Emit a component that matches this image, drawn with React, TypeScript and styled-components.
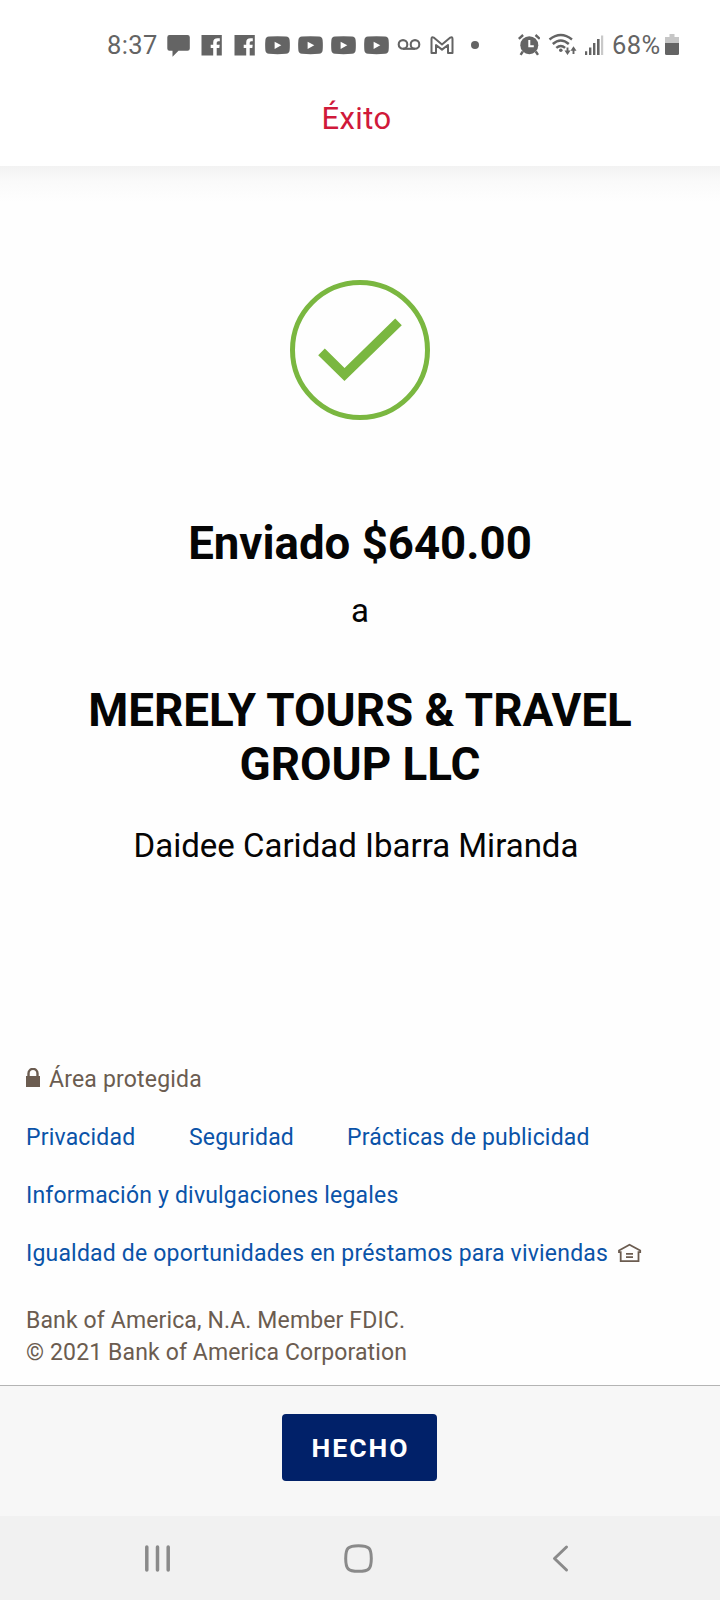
import React from "react";
import styled, { createGlobalStyle } from "styled-components";

const GlobalStyle = createGlobalStyle`
  * { box-sizing: border-box; }
  body { margin: 0; background: #fefefe; font-family: Roboto, "Liberation Sans", sans-serif; }
  h1, h2, p { margin: 0; }
`;

const Screen = styled.div`
  width: 720px;
  height: 1600px;
  display: flex;
  flex-direction: column;
  background: #fefefe;
  overflow: hidden;
`;

const Header = styled.header`
  height: 166px;
  background: #fff;
  flex: none;
`;

const StatusBar = styled.div`
  height: 90px;
  padding: 33px 41px 0 107px;
  display: flex;
  justify-content: space-between;
  color: #646464;
`;

const StatusGroup = styled.div<{ $gap: number; $indent?: number }>`
  display: flex;
  height: 24px;
  gap: ${(p) => p.$gap}px;
  padding-left: ${(p) => p.$indent ?? 0}px;
`;

const StatusText = styled.span<{ $width: number }>`
  width: ${(p) => p.$width}px;
  font-size: 25.5px;
  line-height: 25px;
  letter-spacing: 0.4px;
  white-space: nowrap;
`;

const Glyph = styled.svg`
  display: block;
  flex: none;
`;

const Title = styled.h1`
  text-align: center;
  color: #d0193a;
  font-size: 31px;
  font-weight: 400;
  line-height: 57px;
  letter-spacing: 0.4px;
  padding-right: 7px;
`;

const Main = styled.main`
  flex: 1;
  display: flex;
  flex-direction: column;
  align-items: center;
  text-align: center;
  color: #050505;
  padding-top: 90px;
  background: linear-gradient(#f2f2f2, #fafafa 16px, #fefefe 36px);
`;

const Amount = styled.h2`
  margin-top: 81px;
  font-size: 45.6px;
  line-height: 54px;
  font-weight: 700;
`;

const Preposition = styled.p`
  margin-top: 16px;
  font-size: 33px;
  line-height: 48px;
`;

const Recipient = styled.h2`
  width: 600px;
  margin-top: 49px;
  font-size: 45.75px;
  line-height: 54px;
  font-weight: 700;
`;

const Person = styled.p`
  margin-top: 30px;
  font-size: 33px;
  line-height: 48px;
  padding-right: 8px;
`;

const Legal = styled.section`
  flex: none;
  padding: 1px 26px 0;
  height: 336px;
  color: #6b5c50;
  font-size: 23px;
  letter-spacing: 0.19px;
`;

const LegalRow = styled.div`
  display: flex;
  align-items: center;
  height: 58px;
  padding-top: 1px;
  white-space: nowrap;
`;

const Link = styled.a<{ $width?: number }>`
  color: #0a53a8;
  ${(p) => (p.$width ? `width: ${p.$width}px;` : "")}
`;

const Copyright = styled.p`
  margin-top: 23px;
  line-height: 32px;
  letter-spacing: 0.13px;
`;

const ActionBar = styled.footer`
  flex: none;
  height: 131px;
  border-top: 1px solid #b4b4b4;
  background: #f7f7f7;
  padding: 28px 0 0 282px;
`;

const DoneButton = styled.button`
  display: block;
  width: 155px;
  height: 67px;
  border: 0;
  border-radius: 4px;
  background: #012169;
  color: #fff;
  font: 700 26.5px/67px Roboto, sans-serif;
  letter-spacing: 2px;
  padding: 0 0 0 2px;
`;

const SystemNav = styled.nav`
  flex: none;
  height: 84px;
  background: #f1f1f1;
  display: flex;
  justify-content: space-between;
  padding: 27px 150px 0 143px;
`;

const Facebook = () => (
  <Glyph width="21" height="24" fill="currentColor">
    <path d="M0.5 2H20.8V22.5H15.7V15H18.3L18.7 11.8H15.7V9.8Q15.7 8.3 17.2 8.3H18.8V5.2H16.6Q12.2 5.2 12.2 9.4V11.8H9.7V15H12.2V22.5H0.5Z" />
  </Glyph>
);

const YouTube = () => (
  <Glyph width="25" height="24">
    <path d="M4 3.6Q12.5 2.8 21 3.6Q24.3 3.9 24.6 7Q25.1 12.3 24.6 17.5Q24.3 20.5 21 20.8Q12.5 21.6 4 20.8Q0.7 20.5 0.4 17.5Q-0.1 12.3 0.4 7Q0.7 3.9 4 3.6Z" fill="currentColor" />
    <path d="M9.6 8.7L16.3 12.3L9.6 15.9Z" fill="#fff" />
  </Glyph>
);

export default function App() {
  return (
    <>
      <GlobalStyle />
      <Screen>
        <Header>
          <StatusBar>
            <StatusGroup $gap={8}>
              <StatusText $width={52}>8:37</StatusText>
              <Glyph width="24" height="24" fill="currentColor">
                <path d="M2.5 2H20.5Q22.8 2 22.8 4.3V15.5Q22.8 17.8 20.5 17.8H11.5L5.5 23.8V17.8H2.5Q0.3 17.8 0.3 15.5V4.3Q0.3 2 2.5 2Z" />
              </Glyph>
              <StatusGroup $gap={12} $indent={2}>
                <Facebook />
                <Facebook />
              </StatusGroup>
              <StatusGroup $gap={8} $indent={2}>
                <YouTube />
                <YouTube />
                <YouTube />
                <YouTube />
                <Glyph width="24" height="24" fill="none" stroke="currentColor" strokeWidth="2.1">
                  <circle cx="6" cy="11.4" r="4.3" />
                  <circle cx="18" cy="11.4" r="4.3" />
                  <path d="M6 15.8H18" />
                </Glyph>
                <Glyph width="26" height="24" fill="none" stroke="currentColor" strokeWidth="2" strokeLinejoin="round">
                  <path d="M2.5 20V6Q2.5 3.4 4.7 4.6L13 11.4L21.3 4.6Q23.5 3.4 23.5 6V20H19V12L13 16.6L7 12V20Z" />
                </Glyph>
                <Glyph width="24" height="24" fill="currentColor">
                  <circle cx="12" cy="12" r="4" />
                </Glyph>
              </StatusGroup>
            </StatusGroup>
            <StatusGroup $gap={8}>
              <Glyph width="24" height="24" fill="none" stroke="currentColor">
                <circle cx="13.3" cy="12.2" r="9" fill="currentColor" stroke="none" />
                <path d="M2.8 5.8L7.1 2M23.8 5.8L19.5 2M6.8 18.5L4.6 21.8M19.8 18.5L22 21.8" strokeWidth="2.4" />
                <path d="M13.3 7V13.3H17.8" stroke="#fff" strokeWidth="2" />
              </Glyph>
              <Glyph width="29" height="24" fill="none" stroke="currentColor" strokeWidth="2.4">
                <path d="M1.5 6.5Q12.8 -2.5 24 6.5M4.8 11Q12.8 3.8 20.8 11M8.3 14.8Q12.8 11 17.1 14.8" />
                <circle cx="12.8" cy="17.3" r="1.8" fill="currentColor" stroke="none" />
                <path d="M19.5 14.5V20M25.5 15.5V21" strokeWidth="1.9" />
                <path d="M16.5 17.6H22.5L19.5 21.9ZM22.5 17.7H28.5L25.5 13.3Z" fill="currentColor" stroke="none" />
              </Glyph>
              <Glyph width="19" height="24" fill="currentColor">
                <path d="M0 18.2H2.2V22H0ZM4 14.5H6.4V22H4ZM8 10H10.4V22H8ZM12 6H14.6V22H12Z" />
                <path d="M16 2.5H18.2V22H16Z" opacity="0.35" />
              </Glyph>
              <StatusText $width={45}>68%</StatusText>
              <Glyph width="14" height="24" fill="currentColor">
                <path d="M4.5 1H9.5V4H14V11H0V4H4.5Z" fill="#c6c6c6" />
                <path d="M0 10H14V20.5Q14 22 12.5 22H1.5Q0 22 0 20.5Z" />
              </Glyph>
            </StatusGroup>
          </StatusBar>
          <Title>Éxito</Title>
        </Header>

        <Main>
          <Glyph width="180" height="180" viewBox="0 0 180 180" fill="none" stroke="#7ab740">
            <circle cx="90" cy="94" r="67.5" strokeWidth="5" />
            <path d="M51.5 95.8L74.5 118.5L128.5 65.8" strokeWidth="9.4" />
          </Glyph>
          <Amount>Enviado $640.00</Amount>
          <Preposition>a</Preposition>
          <Recipient>MERELY TOURS &amp; TRAVEL GROUP LLC</Recipient>
          <Person>Daidee Caridad Ibarra Miranda</Person>
        </Main>

        <Legal>
          <LegalRow>
            <Glyph width="23" height="24" fill="currentColor">
              <path d="M0 8H1.3V5.5A5.7 5.8 0 0 1 12.7 5.5V8H14V19H0ZM3.7 8H10.3V5.5A3.3 3.5 0 0 0 3.7 5.5Z" />
            </Glyph>
            <span>Área protegida</span>
          </LegalRow>
          <LegalRow>
            <Link $width={163}>Privacidad</Link>
            <Link $width={158}>Seguridad</Link>
            <Link>Prácticas de publicidad</Link>
          </LegalRow>
          <LegalRow>
            <Link>Información y divulgaciones legales</Link>
          </LegalRow>
          <LegalRow>
            <Link $width={592}>Igualdad de oportunidades en préstamos para viviendas</Link>
            <Glyph width="24" height="24" fill="none" stroke="currentColor" strokeWidth="1.8">
              <path d="M1 8.5L11.5 2.8L22.2 8.5V10.2H20.5V19.2H2.7V10.2H1ZM8 11.8H15M8 15.2H15" />
            </Glyph>
          </LegalRow>
          <Copyright>
            Bank of America, N.A. Member FDIC.
            <br />© 2021 Bank of America Corporation
          </Copyright>
        </Legal>

        <ActionBar>
          <DoneButton>HECHO</DoneButton>
        </ActionBar>
        <SystemNav>
          <Glyph width="30" height="32" fill="none" stroke="#8a8a8a" strokeWidth="3.5" strokeLinecap="round">
            <path d="M3.8 4V27M14.5 4V27M25.2 4V27" />
          </Glyph>
          <Glyph width="38" height="32" fill="none" stroke="#8a8a8a" strokeWidth="3">
            <path d="M15.5 2.7C26 2.7 28.3 5 28.3 15.5S26 28.3 15.5 28.3S2.7 26 2.7 15.5S5 2.7 15.5 2.7Z" />
          </Glyph>
          <Glyph width="20" height="32" fill="none" stroke="#8a8a8a" strokeWidth="3" strokeLinecap="round" strokeLinejoin="round">
            <path d="M16.5 4L4.5 15.5L16.5 27" />
          </Glyph>
        </SystemNav>
      </Screen>
    </>
  );
}
